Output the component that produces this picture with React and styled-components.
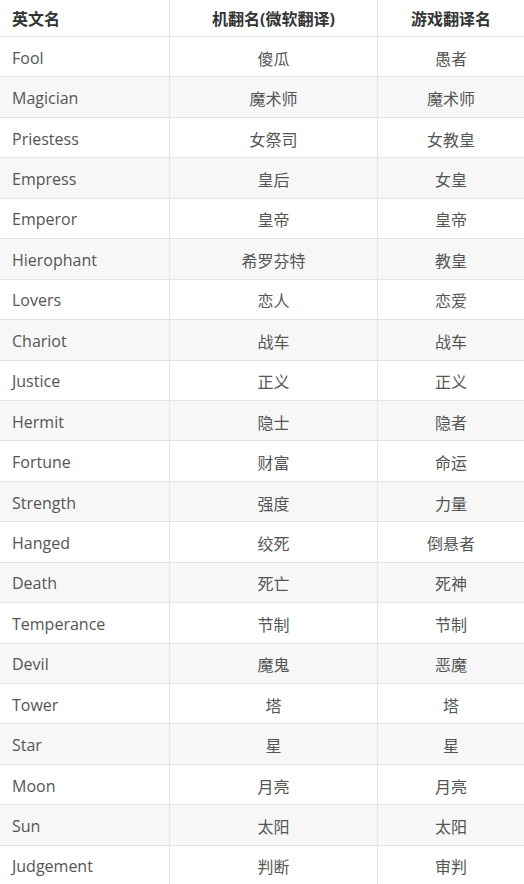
import React from "react";
import styled, { createGlobalStyle } from "styled-components";

const ROWS = [
  ["Fool", "傻瓜", "愚者"],
  ["Magician", "魔术师", "魔术师"],
  ["Priestess", "女祭司", "女教皇"],
  ["Empress", "皇后", "女皇"],
  ["Emperor", "皇帝", "皇帝"],
  ["Hierophant", "希罗芬特", "教皇"],
  ["Lovers", "恋人", "恋爱"],
  ["Chariot", "战车", "战车"],
  ["Justice", "正义", "正义"],
  ["Hermit", "隐士", "隐者"],
  ["Fortune", "财富", "命运"],
  ["Strength", "强度", "力量"],
  ["Hanged", "绞死", "倒悬者"],
  ["Death", "死亡", "死神"],
  ["Temperance", "节制", "节制"],
  ["Devil", "魔鬼", "恶魔"],
  ["Tower", "塔", "塔"],
  ["Star", "星", "星"],
  ["Moon", "月亮", "月亮"],
  ["Sun", "太阳", "太阳"],
  ["Judgement", "判断", "审判"]
];

const GlobalStyle = createGlobalStyle`
  html, body {
    margin: 0;
    padding: 0;
    background: #fff;
    overflow: hidden;
  }
  body {
    font-family: "Open Sans", "Noto Sans CJK SC", sans-serif;
  }
`;

const Table = styled.div`
  display: grid;
  grid-template-columns: 170px 208px 146px;
  grid-template-rows: 37px;
  grid-auto-rows: 40.45px;
  width: 524px;
`;

const Cell = styled.div`
  display: flex;
  align-items: center;
  justify-content: ${({ center }) => (center ? "center" : "flex-start")};
  padding: ${({ head }) => (head ? "0 12px 1px" : "2px 12px 0")};
  box-sizing: border-box;
  font-size: 16px;
  color: ${({ head }) => (head ? "#333" : "#555")};
  font-weight: ${({ head }) => (head ? 700 : 400)};
  background: ${({ striped }) => (striped ? "#f7f7f7" : "#fff")};
  border-bottom: 1px solid #e4e4e4;
  border-right: ${({ last }) => (last ? "none" : "1px solid #e4e4e4")};
  white-space: nowrap;
`;

const App = () => (
  <>
    <GlobalStyle />
    <Table>
      <Cell head>英文名</Cell>
      <Cell head center>机翻名(微软翻译)</Cell>
      <Cell head center last>游戏翻译名</Cell>
      {ROWS.map(([en, mt, game], i) => {
        const striped = i % 2 === 1;
        return (
          <React.Fragment key={en}>
            <Cell striped={striped}>{en}</Cell>
            <Cell striped={striped} center>{mt}</Cell>
            <Cell striped={striped} center last>{game}</Cell>
          </React.Fragment>
        );
      })}
    </Table>
  </>
);

export default App;
